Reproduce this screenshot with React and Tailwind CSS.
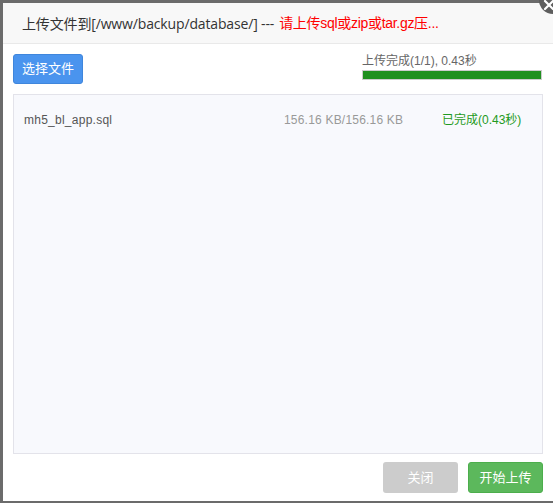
import React from 'react';

const font = { fontFamily: '"Liberation Sans", "Noto Sans CJK SC", sans-serif' };
const titleFont = { fontFamily: '"Open Sans", "Noto Sans CJK SC", sans-serif' };

export default function App() {
    return (
        <div className="w-[553px] h-[503px] overflow-hidden bg-[#6b6b6b] pt-[3px] pl-[3px]" style={font}>
            <div className="relative w-[550px] h-[498px] bg-white flex flex-col">
                {/* en-tête */}
                <div className="h-[41px] bg-[#f8f8f8] border-b border-[#e9e9e9] flex items-center pl-[19px] text-[14px] text-[#333] whitespace-nowrap overflow-hidden">
                    <span className="tracking-[-0.15px]" style={titleFont}>上传文件到[/www/backup/database/] ---</span>
                    <span className="text-[#ff0000] ml-[5px] tracking-[-0.3px]">请上传sql或zip或tar.gz压...</span>
                </div>
                {/* bouton fermer */}
                <div className="absolute -top-[17px] right-[-14px] size-[28px] rounded-full bg-[#5e5e5e] flex items-center justify-center">
                    <svg width="12" height="12" viewBox="0 0 12 12" className="mt-[10px] mr-[8px]">
                        <path d="M2 2L10 10M10 2L2 10" stroke="#fff" strokeWidth="2.2" strokeLinecap="round" />
                    </svg>
                </div>
                {/* barre d'outils */}
                <div className="flex justify-between px-[10px] pt-[10px] h-[50px]">
                    <button className="w-[70px] h-[30px] rounded-[3px] bg-[#4a94ee] border border-[#3f86dc] text-white text-[13px]">选择文件</button>
                    <div className="w-[180px] mr-[1px]">
                        <div className="text-[12px] text-[#666] leading-[14px]">上传完成(1/1), 0.43秒</div>
                        <div className="mt-[2px] h-[10px] border border-[#ccc] bg-[#20901f]"></div>
                    </div>
                </div>
                {/* liste des fichiers */}
                <div className="mx-[10px] h-[360px] border border-[#e3e3ea] bg-[#f8f9fd]">
                    <div className="flex items-center h-[50px] pl-[10px] text-[12px]">
                        <span className="w-[260px] text-[#555] tracking-[0.25px]">mh5_bl_app.sql</span>
                        <span className="w-[158px] text-[#999] tracking-[0.2px]">156.16 KB/156.16 KB</span>
                        <span className="text-[#1f9a22]">已完成(0.43秒)</span>
                    </div>
                </div>
                {/* boutons */}
                <div className="flex justify-end gap-[10px] pr-[10px] pt-[8px]">
                    <button className="w-[75px] h-[31px] rounded-[3px] bg-[#cccccc] text-white text-[13px]">关闭</button>
                    <button className="w-[75px] h-[31px] rounded-[3px] bg-[#5cb85c] border border-[#4cae4c] text-white text-[13px]">开始上传</button>
                </div>
            </div>
        </div>
    );
}
